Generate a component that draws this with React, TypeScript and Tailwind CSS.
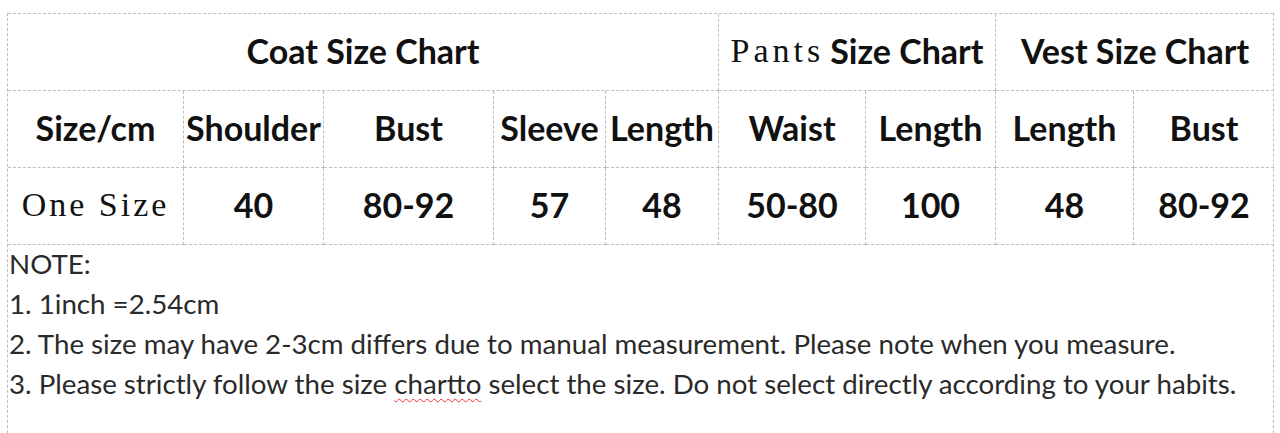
const cols = "grid-cols-[176px_140px_170px_112px_113px_147px_130px_138px_140px]";

const cell = "flex items-center justify-center border-r border-b border-dashed border-[#bdbdbd] h-[77px] pb-[4px]";
const head = "font-['Lato',sans-serif] font-bold text-[34px] text-[#111]";
const serif = "font-['Liberation_Serif',serif] font-normal text-[34px] text-[#111]";

const headers = ["Size/cm", "Shoulder", "Bust", "Sleeve", "Length", "Waist", "Length", "Length", "Bust"];
const values = ["40", "80-92", "57", "48", "50-80", "100", "48", "80-92"];

const App = () => {
    return <div className="w-[1280px] h-[433px] bg-white overflow-hidden pt-[13px] pl-[7px]">
        <div className="w-[1267px] h-[420px] border-l border-r border-dashed border-[#bdbdbd]">

            <div className={`grid ${cols} border-t border-dashed border-[#bdbdbd]`}>
                <div className={`${cell} col-span-5 ${head}`}>Coat Size Chart</div>
                <div className={`${cell} col-span-2 ${head} gap-[6px]`}>
                    <span className={`${serif} tracking-[4px]`}>Pants</span>
                    <span>Size Chart</span>
                </div>
                <div className={`${cell} col-span-2 ${head} border-r-0`}>Vest Size Chart</div>

                {headers.map((h, i) => (
                    <div key={"h" + i} className={`${cell} ${head} ${i === 8 ? "border-r-0" : ""}`}>{h}</div>
                ))}

                <div className={`${cell} ${serif} tracking-[3px]`}>One Size</div>
                {values.map((v, i) => (
                    <div key={"v" + i} className={`${cell} ${head} ${i === 7 ? "border-r-0" : ""}`}>{v}</div>
                ))}
            </div>

            <div className="font-['Lato',sans-serif] text-[27.7px] text-[#2a2a2a] leading-[40px] pl-[1px] -mt-[1px]">
                <p>NOTE:</p>
                <p>1. 1inch =2.54cm</p>
                <p>2. The size may have 2-3cm differs due to manual measurement. Please note when you measure.</p>
                <p>3. Please strictly follow the size <span className="underline decoration-wavy decoration-red-500 decoration-1 underline-offset-4">chartto</span> select the size. Do not select directly according to your habits.</p>
            </div>
        </div>
    </div>
}

export default App
